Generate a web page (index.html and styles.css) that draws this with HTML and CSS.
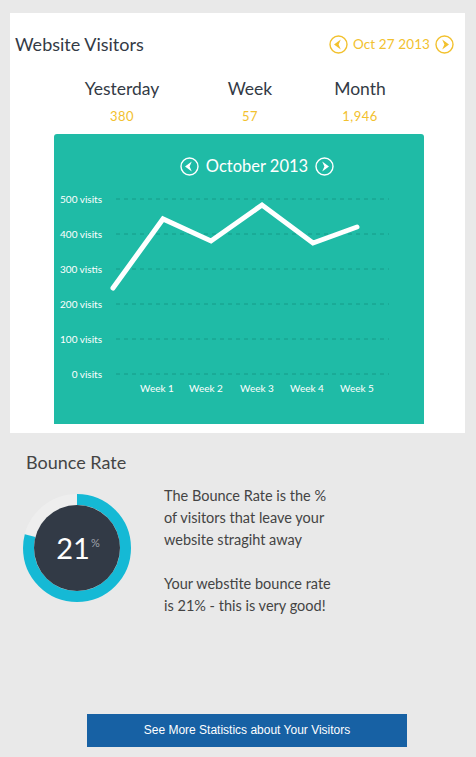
FILE: index.html
```html
<!DOCTYPE html>
<html lang="en">
<head>
    <meta charset="UTF-8">
    <title>Website Visitors</title>
    <link rel="stylesheet" href="styles.css">
</head>
<body>
    <div class="card">
        <div class="card-head">
            <h1>Website Visitors</h1>
            <div class="date-nav">
                <svg class="arrow" width="19" height="19" viewBox="0 0 19 19"><circle cx="9.5" cy="9.5" r="8.5" fill="none" stroke="#f2c12e" stroke-width="1.4"/><polygon points="11.8,4.5 5,9.5 11.8,14.5 9.6,9.5" fill="#f2c12e"/></svg>
                <span>Oct 27 2013</span>
                <svg class="arrow" width="19" height="19" viewBox="0 0 19 19"><circle cx="9.5" cy="9.5" r="8.5" fill="none" stroke="#f2c12e" stroke-width="1.4"/><polygon points="7.2,4.5 14,9.5 7.2,14.5 9.4,9.5" fill="#f2c12e"/></svg>
            </div>
        </div>

        <div class="stats">
            <div class="stat"><div class="stat-label">Yesterday</div><div class="stat-value">380</div></div>
            <div class="stat"><div class="stat-label">Week</div><div class="stat-value">57</div></div>
            <div class="stat"><div class="stat-label">Month</div><div class="stat-value">1,946</div></div>
        </div>

        <div class="chart">
            <div class="chart-head">
                <svg width="19" height="19" viewBox="0 0 19 19"><circle cx="9.5" cy="9.5" r="8.5" fill="none" stroke="#fff" stroke-width="1.4"/><polygon points="11.8,4.5 5,9.5 11.8,14.5 9.6,9.5" fill="#fff"/></svg>
                <span>October 2013</span>
                <svg width="19" height="19" viewBox="0 0 19 19"><circle cx="9.5" cy="9.5" r="8.5" fill="none" stroke="#fff" stroke-width="1.4"/><polygon points="7.2,4.5 14,9.5 7.2,14.5 9.4,9.5" fill="#fff"/></svg>
            </div>
            <svg class="plot" width="370" height="240" viewBox="0 0 370 240">
                <g class="grid">
                    <line x1="62" y1="15" x2="335" y2="15"/>
                    <line x1="62" y1="50" x2="335" y2="50"/>
                    <line x1="62" y1="85" x2="335" y2="85"/>
                    <line x1="62" y1="120" x2="335" y2="120"/>
                    <line x1="62" y1="155" x2="335" y2="155"/>
                    <line x1="62" y1="190" x2="335" y2="190"/>
                </g>
                <g class="y-labels">
                    <text x="48" y="18.5">500 visits</text>
                    <text x="48" y="53.5">400 visits</text>
                    <text x="48" y="88.5">300 vistis</text>
                    <text x="48" y="123.5">200 visits</text>
                    <text x="48" y="158.5">100 visits</text>
                    <text x="48" y="193.5">0 visits</text>
                </g>
                <g class="x-labels">
                    <text x="103" y="207.5">Week 1</text>
                    <text x="152" y="207.5">Week 2</text>
                    <text x="203" y="207.5">Week 3</text>
                    <text x="253" y="207.5">Week 4</text>
                    <text x="303" y="207.5">Week 5</text>
                </g>
                <polyline class="line" points="59,104 109,35 157,57 208,21 259,59 303,43"/>
            </svg>
        </div>
    </div>

    <div class="bounce">
        <h2>Bounce Rate</h2>
        <div class="bounce-row">
            <svg class="ring" width="108" height="108" viewBox="0 0 108 108">
                <circle cx="54" cy="54" r="48.5" fill="none" stroke="#eeeeee" stroke-width="11"/>
                <circle cx="54" cy="54" r="48.5" fill="none" stroke="#15b9d5" stroke-width="11" stroke-dasharray="240.7 304.7" transform="rotate(-90 54 54)"/>
                <circle cx="54" cy="54" r="43" fill="#323a46"/>
                <text class="ring-num" x="50" y="65" text-anchor="middle">21</text>
                <text class="ring-pct" x="68" y="53">%</text>
            </svg>
            <div class="bounce-text">
                <p>The Bounce Rate is the %<br>of visitors that leave your<br>website stragiht away</p>
                <p>Your webstite bounce rate<br>is 21% - this is very good!</p>
            </div>
        </div>
        <a class="more-btn" href="#">See More Statistics about Your Visitors</a>
    </div>
</body>
</html>
```

FILE: styles.css
```css
body {
    margin: 0;
    background-color: #e9e9e9;
    font-family: Lato, "Open Sans", sans-serif;
    color: #333a45;
}
.card {
    background-color: #fff;
    margin: 13px 11px 0 10px;
    padding: 19px 11px 9px 5px;
}
.card-head {
    display: flex;
    justify-content: space-between;
    align-items: center;
    height: 24px;
}
h1 {
    margin: 0;
    font-size: 18px;
    font-weight: normal;
    color: #333a45;
}
.date-nav {
    display: flex;
    align-items: center;
    gap: 5px;
    color: #f2c12e;
    font-size: 13.5px;
    letter-spacing: 0.1px;
}
.arrow {
    display: block;
}
.stats {
    display: grid;
    grid-template-columns: 120px 136px 84px;
    margin: 22px 0 0 47px;
    text-align: center;
}
.stat-label {
    font-size: 17.5px;
    line-height: 22px;
}
.stat-value {
    margin-top: 8px;
    font-size: 13px;
    line-height: 16px;
    color: #f2c12e;
    letter-spacing: 0.5px;
}
.chart {
    width: 370px;
    height: 290px;
    margin: 10px 0 0 39px;
    background-color: #1fbba6;
    border-radius: 3px 3px 0 0;
}
.chart-head {
    display: flex;
    justify-content: center;
    align-items: center;
    gap: 7px;
    height: 20px;
    padding-top: 22px;
    padding-left: 36px;
    color: #fff;
    font-size: 16.5px;
}
.chart-head svg {
    display: block;
}
.plot {
    display: block;
    margin-top: 8px;
}
.grid line {
    stroke: #179a88;
    stroke-width: 1;
    stroke-dasharray: 4 4;
}
.plot text {
    fill: #fff;
    font-family: Lato, sans-serif;
    font-size: 10px;
}
.y-labels text {
    text-anchor: end;
}
.x-labels text {
    text-anchor: middle;
}
.line {
    fill: none;
    stroke: #fff;
    stroke-width: 5;
    stroke-linecap: round;
    stroke-linejoin: miter;
}
.bounce {
    padding: 17px 0 0 23px;
}
h2 {
    margin: 0 0 0 3px;
    font-size: 18px;
    line-height: 24px;
    font-weight: normal;
    color: #444;
}
.bounce-row {
    display: flex;
    align-items: flex-start;
    gap: 33px;
    margin-top: 11px;
}
.ring {
    display: block;
    margin-top: 9px;
}
.ring-num {
    fill: #fff;
    font-family: Lato, sans-serif;
    font-size: 29px;
}
.ring-pct {
    fill: #a0a5ad;
    font-family: Lato, sans-serif;
    font-size: 11px;
}
.bounce-text p {
    margin: 0 0 22px 0;
    font-size: 14.5px;
    line-height: 22px;
    color: #444;
}
.more-btn {
    display: block;
    width: 320px;
    height: 33px;
    margin: 75px 0 0 64px;
    background-color: #1761a4;
    color: #fff;
    font-family: "Liberation Sans", Arial, sans-serif;
    font-size: 12px;
    line-height: 33px;
    text-align: center;
    text-decoration: none;
}
```
